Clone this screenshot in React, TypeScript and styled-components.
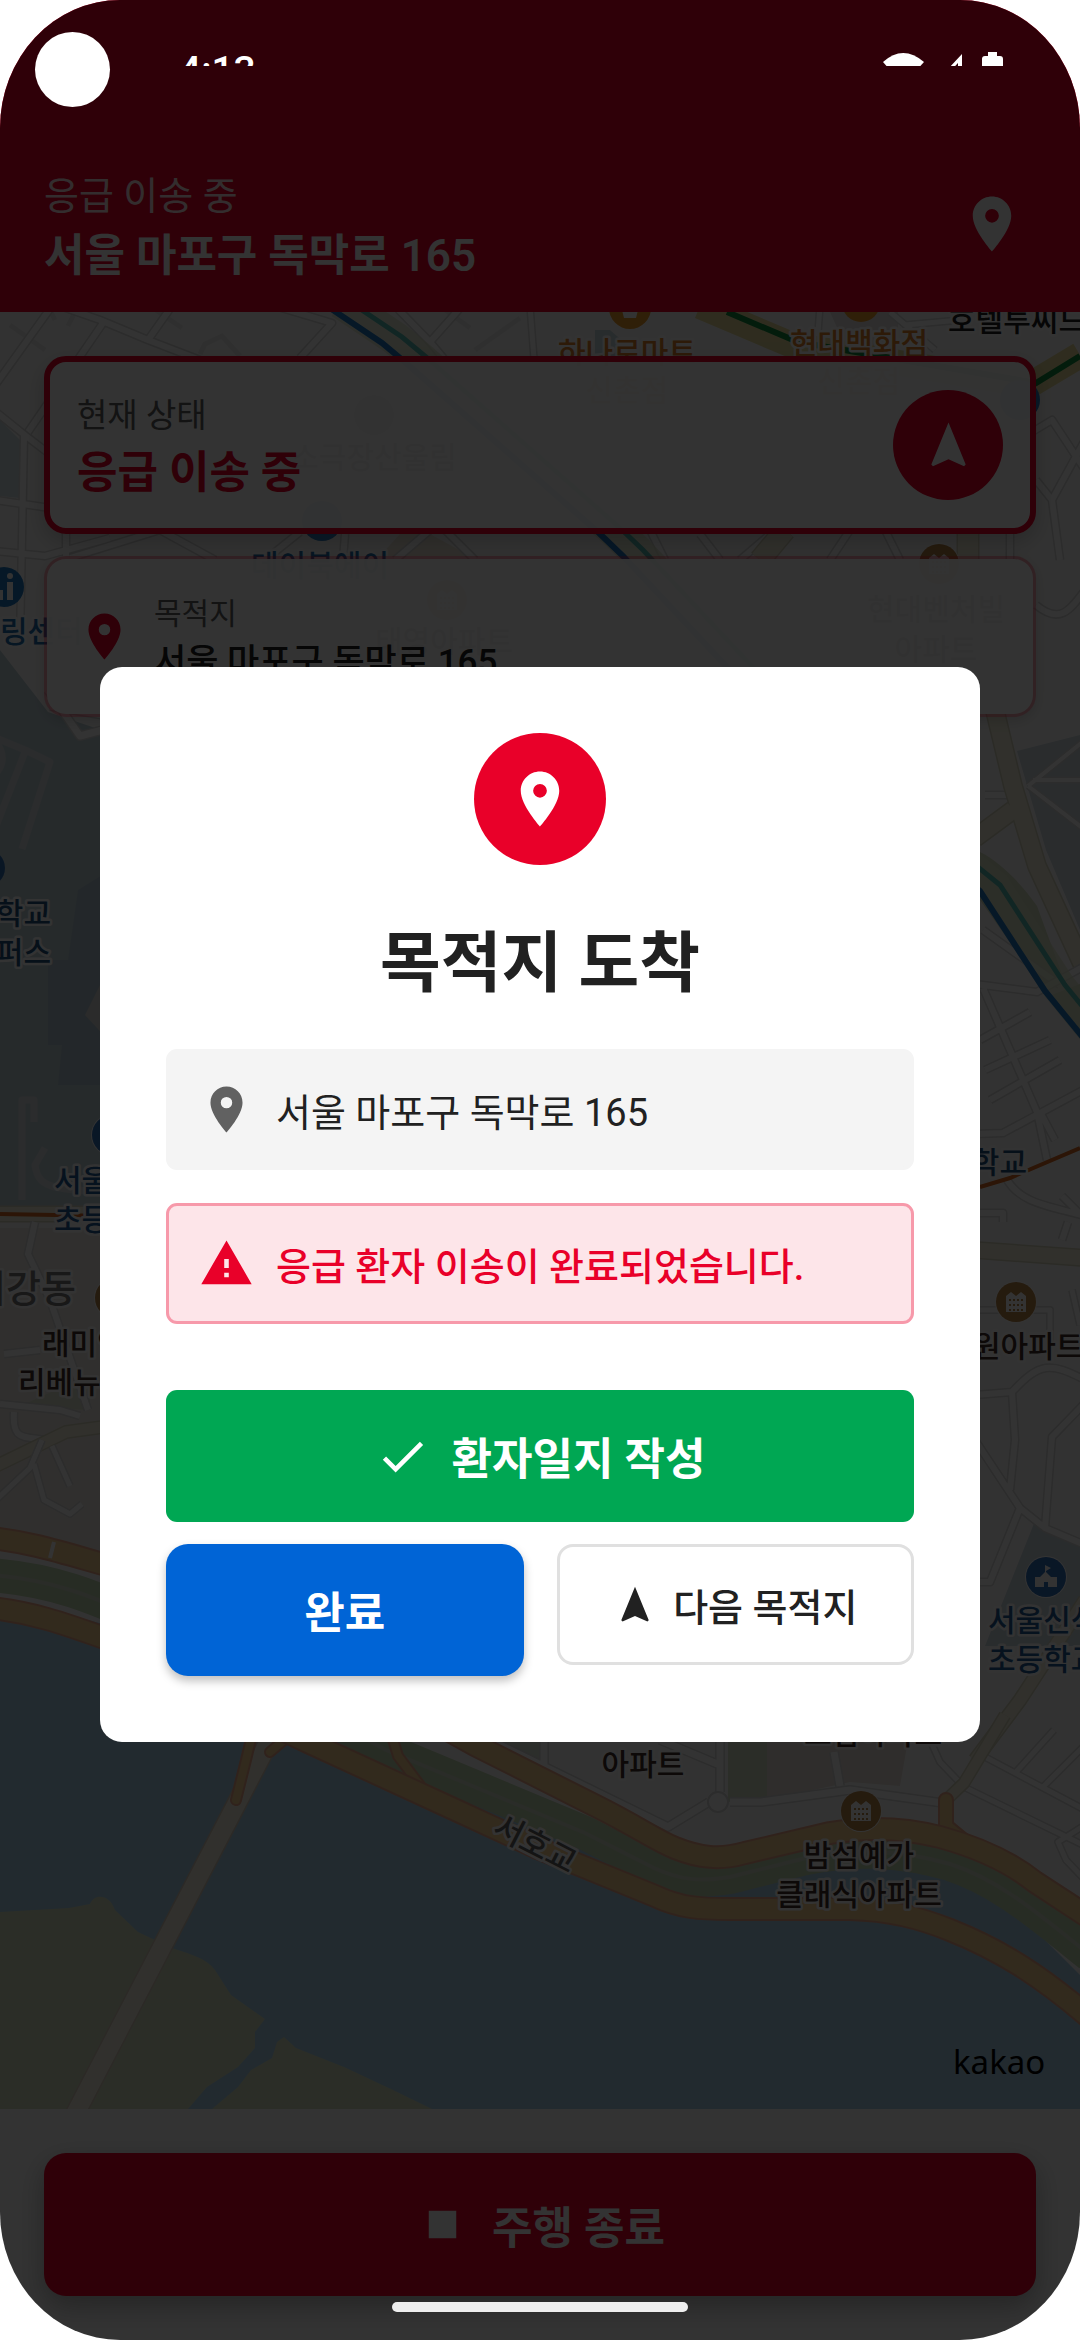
import React from "react";
import styled, { createGlobalStyle, css } from "styled-components";

const color = {
  red: "#e90029",
  green: "#00a753",
  blue: "#0064d6",
  ink: "#212121",
  grey: "#616161",
  line: "#e0e0e0",
};

const GlobalStyle = createGlobalStyle`
  * { box-sizing: border-box; }
  body {
    margin: 0;
    background: #fff;
    color: ${color.ink};
    font-family: Roboto, "Noto Sans CJK KR", sans-serif;
  }
  h1, h2, p { margin: 0; }
  button { font-family: inherit; border: 0; padding: 0; margin: 0; cursor: pointer; }
`;

/* ---------- screen ---------- */

const Screen = styled.div`
  position: relative;
  display: flex;
  flex-direction: column;
  min-height: 100vh;
  border-radius: 120px / 128px;
  overflow: hidden;
  background: #fff;
`;

const Header = styled.header`
  display: flex;
  align-items: center;
  justify-content: space-between;
  min-height: 312px;
  padding: 164px 44px 28px;
  background: ${color.red};
  color: #fff;
`;

const Stack = styled.div`
  display: flex;
  flex-direction: column;
`;

const Text = styled.p<{ $size: number; $weight?: number; $color?: string }>`
  font-size: ${(p) => p.$size}px;
  font-weight: ${(p) => p.$weight ?? 400};
  color: ${(p) => p.$color ?? "inherit"};
`;

const IconButton = styled.button`
  display: flex;
  padding: 11px;
  background: none;
  color: inherit;
`;

const MapArea = styled.main`
  position: relative;
  display: flex;
  flex: 1;
  min-height: 1000px;
  overflow: hidden;
`;

const MapDrawing = styled.svg`
  position: absolute;
  inset: 0;
  width: 100%;
  height: 100%;
`;

const CardList = styled.div`
  position: relative;
  flex: 1;
  display: flex;
  flex-direction: column;
  gap: 22px;
  padding: 44px;
`;

const Card = styled.section<{ $strong?: boolean }>`
  display: flex;
  align-items: center;
  gap: 22px;
  border-radius: 22px;
  background: rgba(255, 255, 255, 0.95);
  background-clip: padding-box;
  ${(p) =>
    p.$strong
      ? css`
          justify-content: space-between;
          min-height: 178px;
          padding: 27px;
          border: 6px solid ${color.red};
          box-shadow: 0 8px 22px rgba(0, 0, 0, 0.2);
        `
      : css`
          min-height: 161px;
          padding: 28px 30px;
          border: 3px solid rgba(233, 0, 41, 0.35);
          box-shadow: 0 4px 14px rgba(0, 0, 0, 0.15);
        `}
`;

const RoundBadge = styled.div<{ $size: number }>`
  display: flex;
  align-items: center;
  justify-content: center;
  width: ${(p) => p.$size}px;
  height: ${(p) => p.$size}px;
  border-radius: 50%;
  background: ${color.red};
  color: #fff;
`;

const Footer = styled.footer`
  padding: 44px;
  background: #fff;
`;

const StopButton = styled.button`
  display: flex;
  align-items: center;
  justify-content: center;
  gap: 22px;
  width: 100%;
  height: 143px;
  border-radius: 22px;
  background: ${color.red};
  color: #fff;
  font-size: 44px;
  font-weight: 700;
  box-shadow: 0 10px 28px rgba(0, 0, 0, 0.3);
`;

/* ---------- dialog ---------- */

const Scrim = styled.div`
  position: absolute;
  inset: 0;
  display: flex;
  align-items: center;
  justify-content: center;
  padding: 132px 100px 63px;
  background: rgba(0, 0, 0, 0.8);
`;

const Dialog = styled.div`
  display: flex;
  flex-direction: column;
  align-items: center;
  width: 100%;
  max-width: 880px;
  padding: 66px;
  border-radius: 22px;
  background: #fff;
`;

const DialogTitle = styled.h2`
  margin: 44px 0;
  font-size: 66px;
  font-weight: 700;
`;

const Notice = styled.div<{ $alert?: boolean }>`
  display: flex;
  align-items: center;
  gap: 22px;
  width: 100%;
  min-height: 121px;
  padding: 0 30px;
  border: 3px solid ${(p) => (p.$alert ? "#f799aa" : "#f4f4f4")};
  border-radius: 11px;
  background: ${(p) => (p.$alert ? "#fde5e9" : "#f4f4f4")};
  color: ${(p) => (p.$alert ? color.red : color.grey)};
  & + & { margin-top: 33px; }
`;

const Actions = styled.div`
  display: grid;
  grid-template-columns: 1fr 1fr;
  align-items: start;
  gap: 22px 33px;
  width: 100%;
  margin-top: 66px;
`;

const ActionButton = styled.button<{ $kind: "journal" | "done" | "next" }>`
  display: flex;
  align-items: center;
  justify-content: center;
  height: 132px;
  gap: 22px;
  color: #fff;
  font-size: 44px;
  font-weight: 700;
  ${(p) =>
    p.$kind === "journal" &&
    css`
      grid-column: 1 / -1;
      border-radius: 11px;
      background: ${color.green};
    `}
  ${(p) =>
    p.$kind === "done" &&
    css`
      border-radius: 22px;
      background: ${color.blue};
      box-shadow: 0 5px 10px rgba(0, 0, 0, 0.25);
    `}
  ${(p) =>
    p.$kind === "next" &&
    css`
      height: 121px;
      gap: 16px;
      border: 3px solid ${color.line};
      border-radius: 16px;
      background: #fff;
      color: ${color.ink};
      font-size: 38px;
      font-weight: 500;
    `}
`;

/* ---------- system chrome ---------- */

const StatusBar = styled.div`
  position: absolute;
  inset: 0 0 auto 0;
  display: flex;
  justify-content: space-between;
  height: 66px;
  padding: 48px 74px 0 179px;
  overflow: hidden;
  color: #fff;
  font-size: 39px;
  line-height: 46px;
  font-weight: 500;
`;

const StatusIcons = styled.svg`
  flex: none;
  width: 126px;
  height: 42px;
`;

const CameraHole = styled.div`
  position: absolute;
  top: 32px;
  left: 35px;
  width: 75px;
  height: 75px;
  border-radius: 50%;
  background: #fff;
`;

const GesturePill = styled.div`
  position: absolute;
  bottom: 28px;
  left: 50%;
  width: 296px;
  height: 10px;
  margin-left: -148px;
  border-radius: 5px;
  background: #eee;
`;

/* ---------- icons ---------- */

const paths = {
  pin: "M12 2C8.13 2 5 5.13 5 9c0 5.25 7 13 7 13s7-7.75 7-13c0-3.87-3.13-7-7-7zm0 9.5a2.5 2.5 0 0 1 0-5 2.5 2.5 0 0 1 0 5z",
  arrow: "M12 2L4.5 20.29l.71.71L12 18l6.79 3 .71-.71z",
  warning: "M1 21h22L12 2 1 21zm12-3h-2v-2h2v2zm0-4h-2v-4h2v4z",
  check: "M9 16.17L4.83 12l-1.42 1.41L9 19 21 7l-1.41-1.41z",
  stop: "M6 6h12v12H6z",
};

const IconSvg = styled.svg<{ $color?: string }>`
  flex: none;
  display: block;
  fill: ${(p) => p.$color ?? "currentColor"};
`;

function Icon({ name, size, tint }: { name: keyof typeof paths; size: number; tint?: string }) {
  return (
    <IconSvg viewBox="0 0 24 24" width={size} height={size} $color={tint} aria-hidden="true">
      <path d={paths[name]} />
    </IconSvg>
  );
}

/* ---------- map ---------- */

const MapText = styled.text`
  font-family: "Noto Sans CJK KR", sans-serif;
  font-weight: 500;
  paint-order: stroke;
  stroke: #fff;
  stroke-width: 5px;
  stroke-linejoin: round;
`;

type LabelProps = {
  x: number;
  y: number;
  children: string;
  fill?: string;
  size?: number;
  anchor?: "start" | "middle" | "end";
  turn?: number;
};

function Label({ x, y, children, fill = "#40302a", size = 30, anchor = "start", turn }: LabelProps) {
  return (
    <MapText
      x={x}
      y={y}
      fill={fill}
      fontSize={size}
      textAnchor={anchor}
      transform={turn ? `rotate(${turn} ${x} ${y})` : undefined}
    >
      {children}
    </MapText>
  );
}

function Street({ d, w = 7 }: { d: string; w?: number }) {
  return (
    <g fill="none" strokeLinejoin="round">
      <path d={d} stroke="#d9d9d9" strokeWidth={w + 3} />
      <path d={d} stroke="#ffffff" strokeWidth={w} />
    </g>
  );
}

function Avenue({ d, w = 14 }: { d: string; w?: number }) {
  return (
    <g fill="none" strokeLinejoin="round">
      <path d={d} stroke="#d8d4bd" strokeWidth={w + 3} />
      <path d={d} stroke="#f3f0da" strokeWidth={w} />
    </g>
  );
}

function Highway({ d, w = 20 }: { d: string; w?: number }) {
  return (
    <g fill="none" strokeLinejoin="round" strokeLinecap="round">
      <path d={d} stroke="#f0ab8c" strokeWidth={w + 4} />
      <path d={d} stroke="#f7cf91" strokeWidth={w} />
    </g>
  );
}

function Apartment({ x, y }: { x: number; y: number }) {
  return (
    <g transform={`translate(${x} ${y})`}>
      <circle r="21" fill="#fff" />
      <circle r="20" fill="#b98545" />
      <path d="M-10 10V-6l5-4 5 4 5-4 5 4v16z" fill="#fff" />
      <path d="M-7-2H7M-7 3H7M-7 8H7" stroke="#b98545" strokeWidth="2" strokeDasharray="2 2" />
    </g>
  );
}

function School({ x, y }: { x: number; y: number }) {
  return (
    <g transform={`translate(${x} ${y})`}>
      <circle r="21" fill="#fff" />
      <circle r="20" fill="#2f72bd" />
      <path d="M-11 10V0h5l5-5v-7l6 3-5 3v1l5 5h6v10h-9V5h-4v5z" fill="#fff" />
    </g>
  );
}

const HIGH_NORTH =
  "M-10 1538C30 1542 60 1552 110 1566C220 1600 340 1670 430 1720L475 1745L596 1806C640 1828 655 1840 675 1848C700 1858 720 1860 745 1853L830 1833C870 1826 905 1828 940 1837C980 1848 1010 1862 1035 1882L1090 1918";
const HIGH_SOUTH =
  "M-10 1608C30 1612 60 1622 110 1640C180 1672 250 1716 310 1743L460 1812L540 1849L655 1896C680 1908 700 1909 730 1909H850C890 1910 920 1918 950 1930C1000 1950 1040 1975 1090 2018";
const PARK_BAND =
  "M-10 1575C60 1580 100 1600 170 1630C250 1664 330 1720 386 1750L482 1790L585 1833L654 1868C680 1880 700 1882 730 1877L806 1858C860 1848 900 1850 950 1864C1000 1880 1040 1915 1090 1955";
const SUBWAY = "M327 306L382 343L406 363L599 533L623 556L800 745L980 891L1045 991L1090 1046";

function CityMap() {
  return (
    <MapDrawing viewBox="0 312 1080 1797" preserveAspectRatio="xMidYMid slice" aria-label="kakao">
      <rect y="312" width="1080" height="1797" fill="#fbfbfa" />

      {/* campus and parks */}
      <path d="M0 420L20 440V498L0 496z" fill="#cfdfe6" />
      <path d="M0 650L48 712L110 733V1208H0z" fill="#bfd1d8" />
      <path d="M48 960H68L78 890L110 870V1085H58L62 1045H48z" fill="#b0c4cf" />
      <path d="M85 1015L110 965V1042z" fill="#d8d8d5" />
      <path d="M0 1228H110V1560L0 1536z" fill="#f1ece6" />
      <path d="M18 1407L60 1388H90V1410z" fill="#dfe6cf" />
      <path d="M1017 751L1080 735V930L1046 850z" fill="#cfdbe2" />
      <path d="M980 852C1000 862 1020 882 1037 906L1063 977L1040 985L980 900z" fill="#d5dfc2" />
      <path d="M1052 995L1080 984V1030z" fill="#d5dfc2" />
      <path d="M1035 1521L1080 1540V1646H985z" fill="#cddbe2" />
      <path d="M595 330H610L640 356H595z" fill="#c9dce2" />
      <path d="M830 312H898V356H850z" fill="#e3e1de" />
      <path d="M400 534H430L470 556H380z" fill="#f1e9db" />
      <path d="M728 1740H767V1797L728 1802z" fill="#d5dfc8" />
      <path d="M767 1740H908L900 1786L850 1782L767 1800z" fill="#e9e1da" />
      <path d="M500 1742H541V1764z" fill="#dde4d4" />

      {/* streets, north */}
      <g fill="none" stroke="#ececec" strokeWidth="5">
        <path d="M10 325L45 350M48 306L55 320M78 306L68 326M150 306L182 328M200 354L205 344L222 336L240 356M440 306L470 328M475 350L520 318" />
      </g>
      <Street d="M52 306L-4 384M103 323L26 435M60 306L100 320L148 340L172 306M148 340L200 360M275 306L332 323L300 358M395 306L430 342L462 306M430 342L445 360" w={6} />
      <Street d="M530 306L535 372M820 306L815 372M905 325L960 320M890 312L935 350" w={5} />
      <Street d="M-4 412L26 436L60 462M24 436L20 640M-4 500L50 508M-4 551L45 556L110 538M66 530V556M70 558L160 530L215 560M345 534L343 560M300 532L265 560" w={6} />
      <Street d="M395 560L430 530M445 530L475 560M650 530L665 560M700 534L720 560M740 560L775 530" w={6} />
      <Street d="M850 530L830 560M885 530L900 560M1010 534V560M1032 432L1052 420L1085 470M1036 480L1052 500L1085 440M1052 500L1060 560M1036 605C1060 625 1070 610 1085 590" w={6} />
      <Avenue d="M760 560L785 530M968 530V560" w={20} />
      <path d="M700 306L792 345L1030 385L1080 355" fill="none" stroke="#e8dd9c" strokeWidth="26" />
      <path d="M727 312L798 342L1036 383L1080 356" fill="none" stroke="#118a3e" strokeWidth="6" />

      {/* streets, west */}
      <Street d="M48 690L80 736L110 728M50 706L110 716" w={7} />
      <g fill="none" stroke="#d5dcdf" strokeWidth="7" strokeLinejoin="round">
        <path d="M-4 738L25 750L50 762L22 849M25 752L-4 826M-4 742C8 758 0 768-4 774" />
        <path d="M34 1122V1100H22V1200M45 1148L35 1165C38 1186 48 1190 110 1192" />
      </g>
      <Avenue d="M-4 1214H110" w={14} />
      <path d="M0 1214L110 1216" stroke="#d96a24" strokeWidth="4" />
      <Street d="M35 1222L28 1254L50 1300L88 1410M4 1354L40 1350M0 1404L60 1410L80 1416M14 1412C12 1440 22 1436 44 1440" w={6} />
      <Avenue d="M-4 1466L66 1432L110 1426" w={11} />
      <Street d="M-4 1500L30 1468L42 1440M34 1464L44 1500L70 1514L82 1504M52 1446L70 1486" w={5} />

      {/* streets, east */}
      <Street d="M1028 786L1085 830M1028 786L1085 740M1033 780H1085" w={4} />
      <Street d="M985 795H1010M1000 820L975 840M983 930L1060 985" w={6} />
      <Avenue d="M990 690L1013 786L1037 866L1085 970M1013 810L975 838" w={17} />
      <Street d="M975 984L1037 992L1085 966M983 988L1037 1112L1047 1160M975 1134L1003 1133L1085 1089M980 1040L1030 1012M985 1070L1050 1040M990 1100L1060 1060M1040 1112L1055 1140" w={6} />
      <Street d="M975 1213H1003V1222M1006 1178C1020 1204 1050 1206 1085 1216M1062 1240L1068 1222M1062 1196L1080 1214" w={6} />
      <Avenue d="M975 1250L1085 1258" w={15} />
      <path d="M980 1187L1010 1178L1080 1148" fill="none" stroke="#d96a24" strokeWidth="4" />
      <Street d="M980 1310H1050V1345M1072 1290L1080 1325" w={5} />
      <Street d="M975 1440L1020 1508L1045 1528L1085 1545M1045 1528L1052 1437L1085 1403M1020 1508L990 1582H975M1012 1392L1015 1440L1010 1490M1012 1392C1040 1362 1050 1362 1085 1380M975 1395L1012 1392" w={6} />
      <Avenue d="M975 1760L1020 1700L1085 1600" w={12} />

      {/* streets, south-east */}
      <Street d="M490 1740L668 1827L709 1802M544 1735V1766M660 1740L722 1766M720 1735V1792M834 1752L840 1786M730 1802H761L850 1790L900 1797L943 1803" w={7} />
      <circle cx="718" cy="1802" r="10" fill="#fff" stroke="#d9d9d9" strokeWidth="2" />
      <Street d="M930 1740L940 1762L964 1787L1085 1846M985 1757L1085 1810M1054 1730L1016 1772M1085 1745L1043 1787M1085 1825L1058 1842L1066 1860L1085 1880" w={5} />
      <Avenue d="M1005 1715L964 1783L943 1803" w={10} />

      {/* river */}
      <path
        d="M0 1600C60 1610 100 1625 170 1640C250 1670 330 1720 386 1735L482 1800L600 1845L680 1892L740 1884L860 1862C920 1862 960 1876 1010 1905L1080 1975V2109H0z"
        fill="#aad2eb"
      />
      <path
        d="M0 1912L69 1908L90 1904C94 1893 110 1894 115 1910L138 1932L172 1948C190 1954 206 1958 215 1970L231 1995L265 2019L255 2032V2048L238 2067L207 2087L188 2109H0z"
        fill="#d7e1c3"
      />
      <path d="M284 2037L296 2048L344 2067L393 2090L432 2109H212L238 2087L251 2070L272 2058L277 2042z" fill="#d7e1c3" />
      <path d={PARK_BAND} fill="none" stroke="#c3d9b4" strokeWidth="34" />
      <path d={PARK_BAND} fill="none" stroke="#cfdcc6" strokeWidth="4" />
      <path d="M275 1730L72 2120" stroke="#d9cdbd" strokeWidth="21" />
      <path d="M275 1730L72 2120" stroke="#f5f1e2" strokeWidth="18" />
      <Highway d="M252 1735L246 1760L236 1800" w={8} />
      <Highway d="M290 1735L270 1752" w={8} />
      <Highway d="M390 1730L398 1756L425 1792" w={8} />
      <Highway d={HIGH_SOUTH} />
      <Highway d="M946 1800V1826L975 1850" w={12} />
      <Highway d={HIGH_NORTH} />
      <path d="M54 1542L50 1558" stroke="#fff" strokeWidth="4" />

      {/* rail lines */}
      <path d={SUBWAY} fill="none" stroke="#dde6c6" strokeWidth="34" transform="translate(14 -4)" opacity="0.7" />
      <path d={SUBWAY} fill="none" stroke="#1f77c4" strokeWidth="6" />
      <path d={SUBWAY} fill="none" stroke="#58bcb4" strokeWidth="5" transform="translate(20 -6)" />

      {/* places */}
      <circle cx="630" cy="308" r="21" fill="#ea9a2c" />
      <path d="M621 306H639L636 318H624z" fill="#fff" />
      <circle cx="861" cy="303" r="19" fill="#ea9a2c" />
      <Label x={627} y={363} anchor="middle" fill="#e0812a">하나로마트</Label>
      <Label x={627} y={401} anchor="middle" fill="#e0812a">신촌점</Label>
      <Label x={859} y={354} anchor="middle" fill="#e0812a">현대백화점</Label>
      <Label x={859} y={392} anchor="middle" fill="#e0812a">신촌점</Label>
      <Label x={948} y={331} fill="#222">호텔투씨드</Label>
      <circle cx="1020" cy="400" r="20" fill="#2f7fc4" />
      <circle cx="374" cy="415" r="20" fill="#9a9a9a" />
      <Label x={374} y={468} anchor="middle">소극장산울림</Label>
      <circle cx="322" cy="521" r="20" fill="#2f7fc4" />
      <Label x={320} y={576} anchor="middle" fill="#1f6fb0">데이북에이</Label>
      <Apartment x={939} y={564} />
      <Label x={936} y={620} anchor="middle">현대벤처빌</Label>
      <Label x={936} y={660} anchor="middle">아파트</Label>
      <Apartment x={447} y={600} />
      <Label x={444} y={652} anchor="middle">태영아파트</Label>

      <circle cx="4" cy="587" r="20" fill="#1f7ac4" />
      <path d="M10 582V600M0 590V600" stroke="#fff" strokeWidth="6" />
      <circle cx="10" cy="576" r="3" fill="#fff" />
      <Label x={0} y={642} fill="#1f6fb0">링센터</Label>

      <circle cx="-14" cy="868" r="19" fill="#2f6fb5" />
      <Label x={51} y={924} anchor="end" fill="#22527f">대학교</Label>
      <Label x={51} y={963} anchor="end" fill="#22527f">캠퍼스</Label>
      <School x={112} y={1135} />
      <Label x={54} y={1191} fill="#1f5b96">서울서강</Label>
      <Label x={54} y={1230} fill="#1f5b96">초등학교</Label>
      <Label x={76} y={1302} anchor="end" fill="#777" size={38}>서강동</Label>
      <Apartment x={115} y={1298} />
      <Label x={42} y={1354}>래미안</Label>
      <Label x={18} y={1393}>리베뉴</Label>

      <Label x={1027} y={1173} anchor="end" fill="#22527f">초등학교</Label>
      <Apartment x={1016} y={1302} />
      <Label x={973} y={1357}>원아파트</Label>
      <School x={1046} y={1577} />
      <Label x={988} y={1631} fill="#1f5b96">서울신석</Label>
      <Label x={988} y={1670} fill="#1f5b96">초등학교</Label>

      <Label x={873} y={1744} anchor="middle">드림아파트</Label>
      <Label x={643} y={1775} anchor="middle">아파트</Label>
      <Apartment x={861} y={1811} />
      <Label x={859} y={1866} anchor="middle">밤섬예가</Label>
      <Label x={859} y={1905} anchor="middle">클래식아파트</Label>
      <Label x={530} y={1854} anchor="middle" fill="#666" size={32} turn={27}>서호교</Label>

      <text x="953" y="2074" fontFamily="Noto Sans, sans-serif" fontSize="33" fill="#000">kakao</text>
    </MapDrawing>
  );
}

/* ---------- app ---------- */

export default function App() {
  const address = "서울 마포구 독막로 165";
  return (
    <>
      <GlobalStyle />
      <Screen>
        <Header>
          <Stack>
            <Text $size={38} $color="#ffffffe6">응급 이송 중</Text>
            <Text as="h1" $size={44} $weight={600}>{address}</Text>
          </Stack>
          <IconButton aria-label="위치">
            <Icon name="pin" size={66} />
          </IconButton>
        </Header>

        <MapArea>
          <CityMap />
          <CardList>
            <Card $strong>
              <Stack>
                <Text $size={33} $color={color.grey}>현재 상태</Text>
                <Text $size={44} $weight={600} $color={color.red}>응급 이송 중</Text>
              </Stack>
              <RoundBadge $size={110}>
                <Icon name="arrow" size={55} />
              </RoundBadge>
            </Card>
            <Card>
              <Icon name="pin" size={55} tint={color.red} />
              <Stack>
                <Text $size={30} $color={color.grey}>목적지</Text>
                <Text $size={35} $weight={500}>{address}</Text>
              </Stack>
            </Card>
          </CardList>
        </MapArea>

        <Footer>
          <StopButton>
            <Icon name="stop" size={55} />
            주행 종료
          </StopButton>
        </Footer>

        <Scrim>
          <Dialog role="dialog" aria-modal="true" aria-labelledby="arrival-title">
            <RoundBadge $size={132}>
              <Icon name="pin" size={66} />
            </RoundBadge>
            <DialogTitle id="arrival-title">목적지 도착</DialogTitle>
            <Notice>
              <Icon name="pin" size={55} />
              <Text $size={38} $color={color.ink}>{address}</Text>
            </Notice>
            <Notice $alert>
              <Icon name="warning" size={55} />
              <Text $size={38} $weight={500}>응급 환자 이송이 완료되었습니다.</Text>
            </Notice>
            <Actions>
              <ActionButton $kind="journal">
                <Icon name="check" size={55} />
                환자일지 작성
              </ActionButton>
              <ActionButton $kind="done">완료</ActionButton>
              <ActionButton $kind="next">
                <Icon name="arrow" size={44} />
                다음 목적지
              </ActionButton>
            </Actions>
          </Dialog>
        </Scrim>

        <StatusBar>
          <span>4:13</span>
          <StatusIcons viewBox="880 48 126 42" fill="#fff" aria-hidden="true">
            <path d="M883 62Q903 44 924 62L903 85z" />
            <path fillRule="evenodd" d="M962 54V84H934zM958 63V80H942z" />
            <path d="M988 52h9v4h3q3 0 3 3v25h-21V59q0-3 3-3h3z" />
          </StatusIcons>
        </StatusBar>
        <CameraHole />
        <GesturePill />
      </Screen>
    </>
  );
}
